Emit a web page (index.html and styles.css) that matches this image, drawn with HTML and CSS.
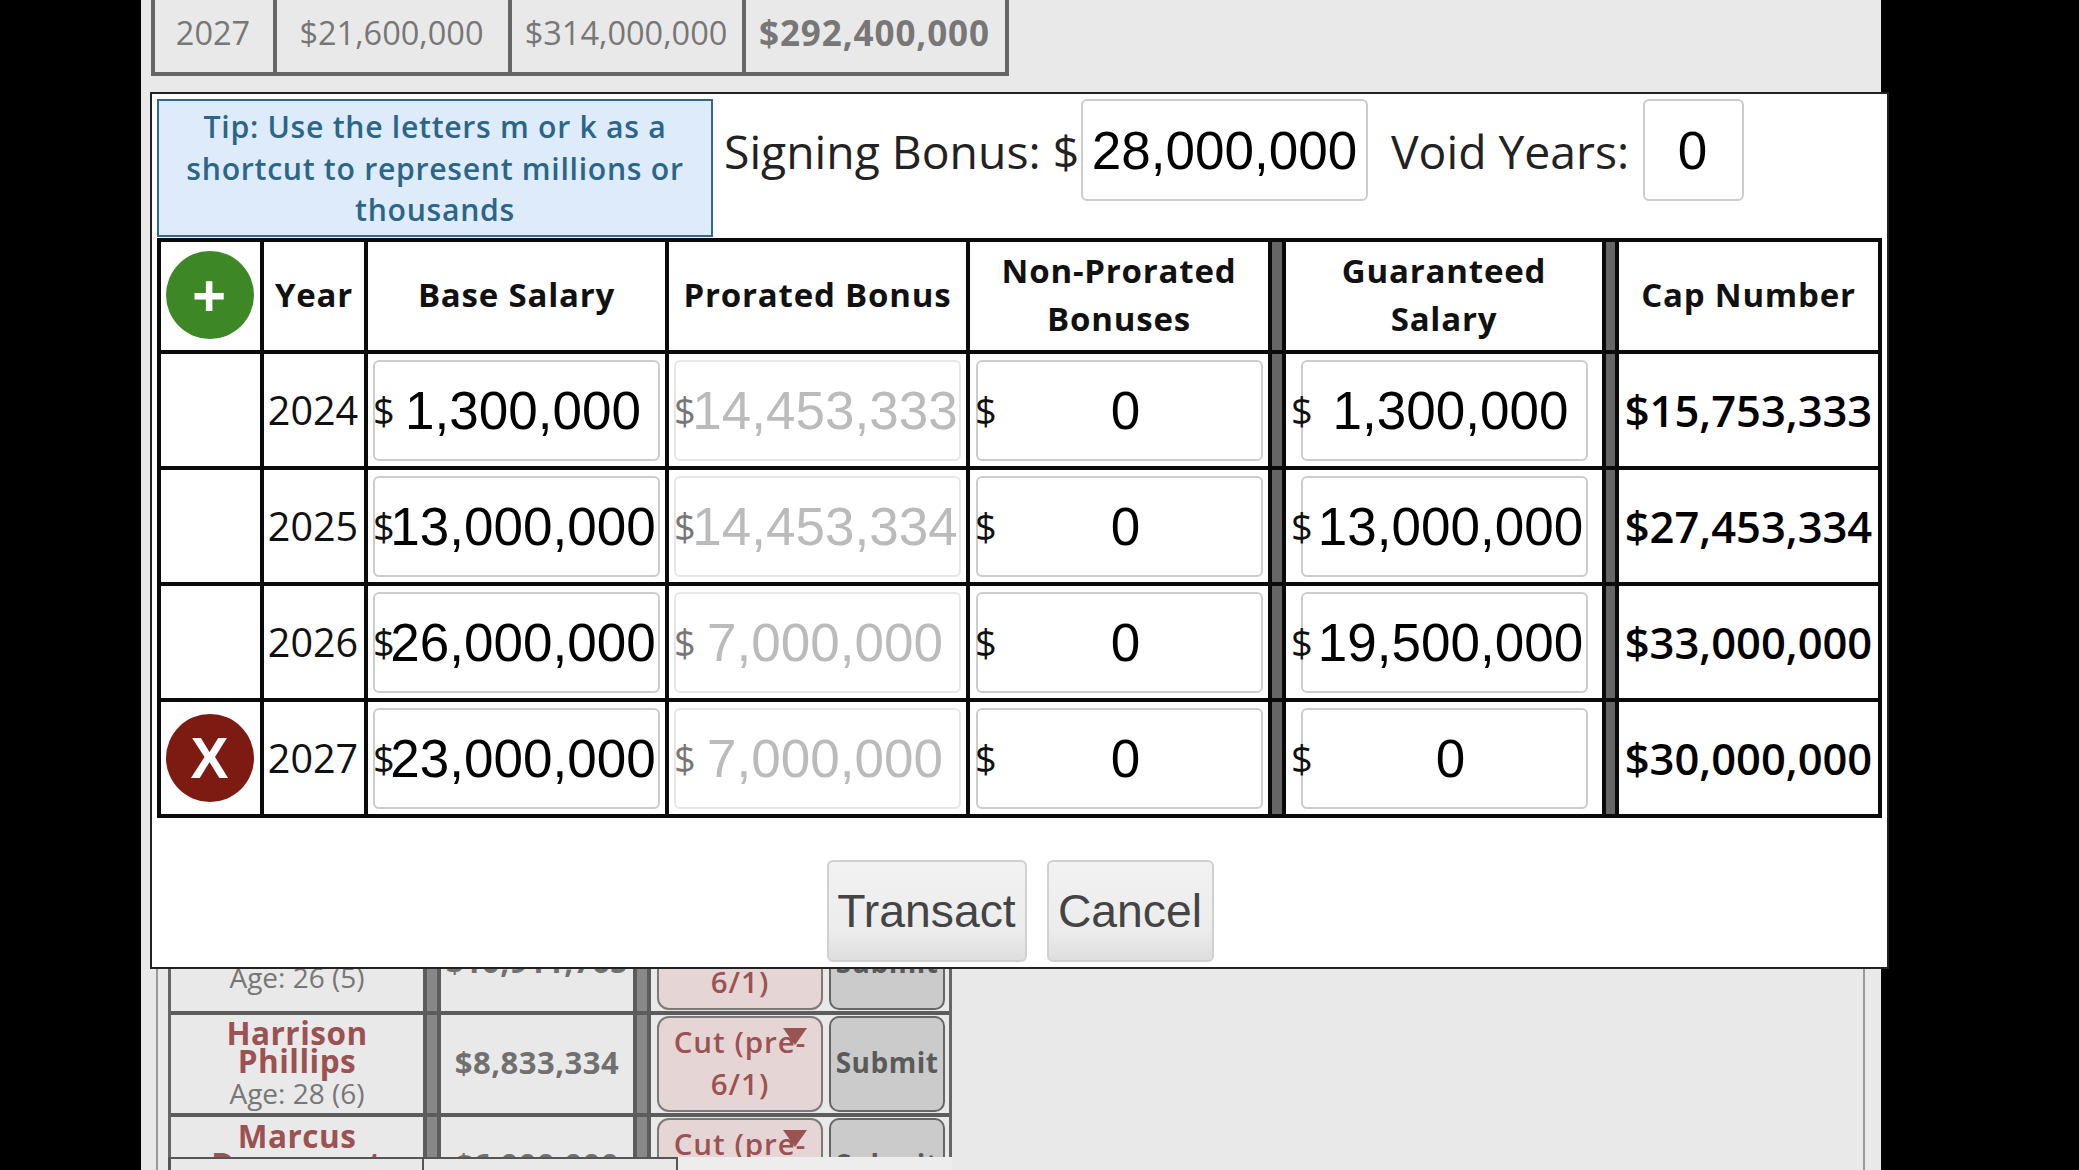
FILE: index.html
```html
<!DOCTYPE html>
<html lang="en">
<head>
<meta charset="utf-8">
<title>Contract editor</title>
<link rel="stylesheet" href="styles.css">
</head>
<body>
<div class="page">
  <div class="summary">
    <div class="sum-cell c1">2027</div>
    <div class="sum-cell c2">$21,600,000</div>
    <div class="sum-cell c3">$314,000,000</div>
    <div class="sum-cell c4 strong">$292,400,000</div>
  </div>
  <div class="panel">
    <div class="roster">
      <div class="r-row r-first">
        <div class="r-name"><div class="age">Age: 26 (5)</div></div>
        <div class="r-sep"></div>
        <div class="r-sal">$10,911,765</div>
        <div class="r-sep"></div>
        <div class="r-act"><div class="sel">Cut (pre-6/1)<span class="arrow"></span></div><div class="sub">Submit</div></div>
      </div>
      <div class="r-row">
        <div class="r-name"><div class="player">Harrison Phillips</div><div class="age">Age: 28 (6)</div></div>
        <div class="r-sep"></div>
        <div class="r-sal">$8,833,334</div>
        <div class="r-sep"></div>
        <div class="r-act"><div class="sel">Cut (pre-6/1)<span class="arrow"></span></div><div class="sub">Submit</div></div>
      </div>
      <div class="r-row">
        <div class="r-name r-top"><div class="player">Marcus Davenport</div></div>
        <div class="r-sep"></div>
        <div class="r-sal">$6,000,000</div>
        <div class="r-sep"></div>
        <div class="r-act"><div class="sel">Cut (pre-6/1)<span class="arrow"></span></div><div class="sub">Submit</div></div>
      </div>
    </div>
    <div class="foot-strip">
      <div class="foot-cell f1"></div>
      <div class="foot-cell f2"></div>
    </div>
  </div>
</div>

<div class="modal">
  <div class="modal-top">
    <div class="tip">Tip: Use the letters m or k as a shortcut to represent millions or thousands</div>
    <label class="lbl lbl-sign">Signing Bonus: $</label>
    <input class="big-in in-sign" value="28,000,000">
    <label class="lbl lbl-void">Void Years:</label>
    <input class="big-in in-void" value="0">
  </div>
  <table class="grid">
    <colgroup>
      <col class="w1"><col class="w2"><col class="w3"><col class="w3"><col class="w4"><col class="w5"><col class="w6"><col class="w5b"><col class="w7">
    </colgroup>
    <tr class="hd">
      <th class="act"><span class="circle add">+</span></th>
      <th>Year</th>
      <th>Base Salary</th>
      <th>Prorated Bonus</th>
      <th>Non-Prorated Bonuses</th>
      <th class="sep"></th>
      <th>Guaranteed<br>Salary</th>
      <th class="sep"></th>
      <th>Cap Number</th>
    </tr>
    <tr class="rw">
      <td></td><td class="yr">2024</td>
      <td class="mon"><span class="cur">$</span><input class="amt" value="1,300,000"></td>
      <td class="mon"><span class="cur dim">$</span><input class="amt off" disabled value="14,453,333"></td>
      <td class="mon"><span class="cur">$</span><input class="amt" value="0"></td>
      <td class="sep"></td>
      <td class="mon gs"><span class="cur">$</span><input class="amt" value="1,300,000"></td>
      <td class="sep"></td>
      <td class="cap">$15,753,333</td>
    </tr>
    <tr class="rw">
      <td></td><td class="yr">2025</td>
      <td class="mon"><span class="cur">$</span><input class="amt" value="13,000,000"></td>
      <td class="mon"><span class="cur dim">$</span><input class="amt off" disabled value="14,453,334"></td>
      <td class="mon"><span class="cur">$</span><input class="amt" value="0"></td>
      <td class="sep"></td>
      <td class="mon gs"><span class="cur">$</span><input class="amt" value="13,000,000"></td>
      <td class="sep"></td>
      <td class="cap">$27,453,334</td>
    </tr>
    <tr class="rw">
      <td></td><td class="yr">2026</td>
      <td class="mon"><span class="cur">$</span><input class="amt" value="26,000,000"></td>
      <td class="mon"><span class="cur dim">$</span><input class="amt off" disabled value="7,000,000"></td>
      <td class="mon"><span class="cur">$</span><input class="amt" value="0"></td>
      <td class="sep"></td>
      <td class="mon gs"><span class="cur">$</span><input class="amt" value="19,500,000"></td>
      <td class="sep"></td>
      <td class="cap">$33,000,000</td>
    </tr>
    <tr class="rw">
      <td class="act"><span class="circle del">X</span></td><td class="yr">2027</td>
      <td class="mon"><span class="cur">$</span><input class="amt" value="23,000,000"></td>
      <td class="mon"><span class="cur dim">$</span><input class="amt off" disabled value="7,000,000"></td>
      <td class="mon"><span class="cur">$</span><input class="amt" value="0"></td>
      <td class="sep"></td>
      <td class="mon gs"><span class="cur">$</span><input class="amt" value="0"></td>
      <td class="sep"></td>
      <td class="cap">$30,000,000</td>
    </tr>
  </table>
  <div class="actions">
    <button class="btn btn-t">Transact</button>
    <button class="btn btn-c">Cancel</button>
  </div>
</div>
</body>
</html>
```
FILE: styles.css
```css
* { box-sizing: border-box; }
html, body { margin: 0; height: 1170px; overflow: hidden; background: #000; }
body { font-family: "Open Sans", sans-serif; position: relative; }

.page {
  width: 1740px; height: 1170px; margin-left: 141px;
  background: #e9e9e9;
  display: flex; flex-direction: column; justify-content: space-between;
  overflow: hidden;
}

.summary {
  margin-left: 10px; width: 858px; height: 76px;
  display: flex;
  border: 4px solid #666; border-top: 0;
  color: #777; font-size: 32.5px;
}
.sum-cell { display: flex; align-items: center; justify-content: center; padding: 0 2px 8px 0; border-right: 4px solid #666; }
.sum-cell.c1 { width: 122px; }
.sum-cell.c2 { width: 235px; }
.sum-cell.c3 { width: 234px; }
.sum-cell.c4 { flex: 1; border-right: 0; }
.strong { font-weight: 700; font-size: 35px; letter-spacing: .9px; }

.panel {
  position: relative; margin-left: 15px; width: 1709px; height: 254px;
  border-left: 2px solid #999; border-right: 2px solid #999;
  overflow: hidden;
}
.roster { margin-left: 10px; width: 784px; border: solid #666; border-width: 0 3px; display: flex; flex-direction: column; }
.r-row { display: flex; height: 102px; border-bottom: 4px solid #5c5c5c; flex: none; }
.r-row.r-first { height: 99px; }
.r-name { width: 252px; display: flex; flex-direction: column; justify-content: center; align-items: center; text-align: center; padding-top: 2px; }
.r-first .r-name { justify-content: flex-end; padding: 0 0 16px; }
.r-name.r-top { justify-content: flex-start; padding-top: 5px; }
.player { font-weight: 700; font-size: 31.5px; line-height: 28px; color: #9a5252; padding: 0 40px; letter-spacing: .5px; }
.age { font-size: 28px; line-height: 36px; color: #777; }
.r-sep { width: 18px; background: #888; border: solid #5c5c5c; border-width: 0 4px; flex: none; }
.r-sal { width: 192px; display: flex; align-items: center; justify-content: center; padding-bottom: 5px; font-weight: 700; font-size: 31px; color: #707070; letter-spacing: .5px; }
.r-act { flex: 1; display: flex; gap: 6px; padding: 1px 4px 1px 6px; }
.sel {
  position: relative; width: 166px; padding: 3px 14px 0;
  background: #e6d5d5; border: 2px solid #7a7a7a; border-radius: 12px;
  color: #9a5252; font-weight: 600; font-size: 29.5px; line-height: 41.5px; text-align: center; letter-spacing: 1px;
}
.r-first .sel { padding-top: 0; }
.arrow { position: absolute; left: 124px; top: 10px; width: 0; height: 0; border: solid transparent; border-width: 17px 12px 0; border-top-color: #9a5252; }
.sub {
  width: 116px; display: flex; align-items: center; justify-content: center; padding-bottom: 4px;
  background: #cbcbcb; border: 2px solid #666; border-radius: 10px;
  color: #5a5a5a; font-weight: 700; font-size: 28px; letter-spacing: .5px;
}
.foot-strip { position: absolute; left: 10px; bottom: 0; width: 784px; height: 13px; background: #ededed; display: flex; }
.foot-cell { height: 13px; background: #e9e9e9; border-top: 2px solid #555; }
.foot-cell.f1 { width: 256px; border-left: 3px solid #555; border-right: 2px solid #555; }
.foot-cell.f2 { width: 254px; border-right: 2px solid #555; }

.modal {
  position: absolute; left: 150px; top: 92px; width: 1739px; height: 877px;
  background: #fff; border: 2px solid #222;
  padding: 5px 4px 0 5px;
  display: flex; flex-direction: column;
}
.modal-top { display: flex; align-items: flex-start; height: 139px; flex: none; }
.tip {
  width: 556px; height: 138px; flex: none;
  background: #deebfb; border: 2px solid #33698d;
  color: #2b6688; font-weight: 600; font-size: 30.2px; line-height: 41.5px; letter-spacing: .7px; text-align: center;
  padding: 5px 10px 0;
}
.lbl { font-size: 46.3px; line-height: 106px; color: #222; white-space: nowrap; }
.lbl-sign { margin-left: 11px; width: 357px; flex: none; }
.lbl-void { margin-left: 23px; width: 252px; flex: none; }
.big-in {
  height: 102px; flex: none;
  border: 2px solid #ccc; border-radius: 6px; background: #fff; color: #000;
  font-family: "Liberation Sans", sans-serif; font-size: 53px; text-align: center; padding: 0;
}
.in-sign { width: 287px; }
.in-void { width: 101px; padding-right: 2px; }

.grid {
  border-collapse: collapse; table-layout: fixed; width: 1721px; flex: none;
}
.grid col.w1 { width: 103px; }
.grid col.w2 { width: 104px; }
.grid col.w3 { width: 301px; }
.grid col.w4 { width: 302px; }
.grid col.w5 { width: 14px; }
.grid col.w5b { width: 13px; }
.grid col.w6 { width: 320px; }
.grid col.w7 { width: 263px; }
.grid th, .grid td { border: 4px solid #0a0a0a; padding: 0; text-align: center; position: relative; }
.hd th { height: 112px; padding-bottom: 2px; font-size: 33px; font-weight: 700; line-height: 48px; color: #111; letter-spacing: .8px; }
.rw td { height: 116px; }
.grid .act { padding-right: 2px; }
.grid .sep { background: #666; }
.grid .yr { font-size: 39.5px; color: #111; padding-right: 2px; }
.cap { font-size: 43.5px; font-weight: 600; color: #000; white-space: nowrap; }

.circle {
  display: inline-flex; align-items: center; justify-content: center;
  width: 88px; height: 88px; border-radius: 50%; color: #fff; vertical-align: middle;
}
.add { background: #3d8727; font-size: 60px; font-weight: 700; line-height: 1; }
.del { background: #7d1a12; font-family: "Liberation Sans", sans-serif; font-size: 57px; font-weight: 700; }

.mon { vertical-align: middle; }
.amt {
  display: block; margin: 0 auto; width: 287px; height: 101px;
  border: 2px solid #ccc; border-radius: 6px; background: #fff; color: #000;
  font-family: "Liberation Sans", sans-serif; font-size: 53px; text-align: center;
  padding: 0 0 0 13px;
}
.amt.off { color: #bbb; border-color: #e6e6e6; padding-left: 15px; }
.cur { position: absolute; left: 5px; top: 50%; transform: translateY(-50%); font-size: 38px; color: #111; z-index: 1; }
.cur.dim { color: #777; }

.actions { flex: 1; display: flex; justify-content: center; gap: 20px; padding: 42px 0 0; }
.btn {
  height: 102px; border: 2px solid #d0d0d0; border-radius: 6px;
  background: linear-gradient(#f2f2f2, #ececec 70%, #dedede);
  font-family: "Liberation Sans", sans-serif; font-size: 46.3px; color: #444; padding: 0;
}
.btn-t { width: 200px; }
.btn-c { width: 167px; }
```
